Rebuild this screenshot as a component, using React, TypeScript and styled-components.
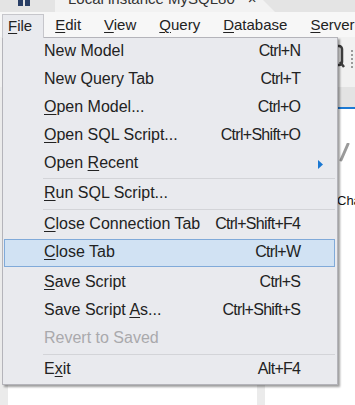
import React from 'react';
import styled, { createGlobalStyle } from 'styled-components';

const Global = createGlobalStyle`
  html, body { margin: 0; padding: 0; }
  body {
    width: 355px;
    height: 405px;
    overflow: hidden;
    background: #ffffff;
    font-family: "Liberation Sans", Arial, sans-serif;
  }
`;

const Window = styled.div`
  width: 355px;
  height: 405px;
  display: flex;
  flex-direction: column;
  overflow: hidden;
`;

const TitleBar = styled.div`
  flex: none;
  height: 12px;
  background: #e4e4e4;
  display: flex;
  align-items: flex-start;
  overflow: hidden;
`;

const AppIcon = styled.svg`
  flex: none;
  margin-left: 18px;
  margin-right: 25px;
`;

const DocTab = styled.div`
  flex: none;
  width: 220px;
  height: 12px;
  background: #f2f2f2;
  clip-path: polygon(0 0, calc(100% - 12px) 0, 100% 100%, 0 100%);
  display: flex;
  align-items: flex-start;
  padding-left: 13px;
  box-sizing: border-box;
  gap: 13px;
  font-size: 15px;
  color: #333;
  white-space: nowrap;
`;

const DocTabText = styled.span`
  margin-top: -10px;
  line-height: 17px;
`;

const MenuBar = styled.div`
  flex: none;
  position: relative;
  height: 25px;
  background: #f7f7f7;
  display: flex;
  align-items: flex-end;
  padding-left: 2px;
  gap: 5px;
  white-space: nowrap;
`;

const BarItem = styled.div<{ $open?: boolean }>`
  position: relative;
  z-index: ${(p) => (p.$open ? 6 : 'auto')};
  box-sizing: border-box;
  height: 24px;
  margin-bottom: ${(p) => (p.$open ? '-1px' : '0')};
  padding: 2px 11px 0 5px;
  border: 1px solid ${(p) => (p.$open ? '#c6c6cb' : 'transparent')};
  border-bottom: none;
  background: ${(p) => (p.$open ? '#e9eaee' : 'transparent')};
  font-size: 15px;
  line-height: 18px;
  color: #222;
`;

const Mn = styled.span`
  text-decoration: underline;
  text-decoration-thickness: 1px;
  text-underline-offset: 2px;
`;

const Dropdown = styled.div`
  position: absolute;
  top: 25px;
  left: 2px;
  z-index: 5;
  width: 336px;
  box-sizing: border-box;
  background: #e9eaee;
  border: 1px solid #b4b4ba;
  box-shadow: 2px 2px 2px rgba(0, 0, 0, 0.38);
  display: flex;
  flex-direction: column;
`;

const Row = styled.div<{ $active?: boolean; $disabled?: boolean }>`
  box-sizing: border-box;
  height: 28px;
  margin: 0 2px 0 1px;
  padding: 0 11px 3px 39px;
  border: 1px solid ${(p) => (p.$active ? '#80aad9' : 'transparent')};
  background: ${(p) => (p.$active ? '#d1e2f3' : 'transparent')};
  display: grid;
  grid-template-columns: 1fr auto 22px;
  align-items: center;
  font-size: 16px;
  color: ${(p) => (p.$disabled ? '#a9a9ac' : '#222')};
  white-space: nowrap;
`;

const Shortcut = styled.span`
  text-align: right;
  letter-spacing: -0.7px;
  margin-right: 0.7px;
`;

const SubArrow = styled.svg`
  justify-self: end;
  margin-top: 3px;
`;

const Separator = styled.div<{ $hidden?: boolean }>`
  height: 1px;
  margin: 0 2px 1.5px 40px;
  background: ${(p) => (p.$hidden ? 'transparent' : '#d3d4d8')};
`;

const Toolbar = styled.div`
  flex: none;
  height: 50px;
  background: #f1f1f1;
  display: flex;
  justify-content: flex-end;
  align-items: flex-start;
  gap: 6px;
  padding: 7px 2px 0 0;
  box-sizing: border-box;
`;

const Grip = styled.div`
  width: 0;
  height: 18px;
  margin-top: 6px;
  border-left: 2px dotted #9a9a9a;
`;

const Workspace = styled.div`
  flex: 1;
  display: flex;
  min-height: 0;
`;

const Strip = styled.div<{ $w: number }>`
  flex: none;
  width: ${(p) => p.$w}px;
  background: #ebebeb;
`;

const Sidebar = styled.div`
  flex: none;
  width: 249px;
  background: #ffffff;
`;

const Main = styled.div`
  flex: 1;
  display: flex;
  flex-direction: column;
  min-width: 0;
`;

const TabBar = styled.div`
  flex: none;
  height: 20px;
  background: #e3e3e3;
  border-bottom: 2px solid #1c7ad4;
`;

const Content = styled.div`
  flex: 1;
  background: #fff;
  display: flex;
  flex-direction: column;
  padding: 34px 0 0 73px;
  gap: 30px;
  white-space: nowrap;
`;

const ContentText = styled.span`
  font-size: 13px;
  color: #111;
  margin-left: -1px;
`;

type Entry =
  | { kind: 'item'; label: string; shortcut?: string; disabled?: boolean; active?: boolean; submenu?: boolean }
  | { kind: 'sep'; hidden?: boolean };

const entries: Entry[] = [
  { kind: 'item', label: 'New Model', shortcut: 'Ctrl+N' },
  { kind: 'item', label: 'New Query Tab', shortcut: 'Ctrl+T' },
  { kind: 'item', label: '&Open Model...', shortcut: 'Ctrl+O' },
  { kind: 'item', label: '&Open SQL Script...', shortcut: 'Ctrl+Shift+O' },
  { kind: 'item', label: 'Open &Recent', submenu: true },
  { kind: 'sep' },
  { kind: 'item', label: '&Run SQL Script...' },
  { kind: 'sep' },
  { kind: 'item', label: '&Close Connection Tab', shortcut: 'Ctrl+Shift+F4' },
  { kind: 'item', label: '&Close Tab', shortcut: 'Ctrl+W', active: true },
  { kind: 'sep', hidden: true },
  { kind: 'item', label: '&Save Script', shortcut: 'Ctrl+S' },
  { kind: 'item', label: 'Save Script &As...', shortcut: 'Ctrl+Shift+S' },
  { kind: 'item', label: 'Revert to Saved', disabled: true },
  { kind: 'sep' },
  { kind: 'item', label: 'E&xit', shortcut: 'Alt+F4' },
];

const barItems = ['&File', '&Edit', '&View', '&Query', '&Database', '&Server'];

function label(s: string) {
  const i = s.indexOf('&');
  if (i < 0) return s;
  return (
    <>
      {s.slice(0, i)}
      <Mn>{s[i + 1]}</Mn>
      {s.slice(i + 2)}
    </>
  );
}

export default function App() {
  return (
    <Window>
      <Global />
      <TitleBar>
        <AppIcon width="12" height="6" viewBox="0 0 12 6">
          <rect x="0" y="0" width="5" height="6" fill="#2a3f66" />
          <rect x="7" y="0" width="5" height="6" fill="#2a3f66" />
        </AppIcon>
        <DocTab>
          <DocTabText>Local instance MySQL80</DocTabText>
          <DocTabText>×</DocTabText>
        </DocTab>
      </TitleBar>
      <MenuBar>
        {barItems.map((b, i) => (
          <BarItem key={b} $open={i === 0}>
            {label(b)}
          </BarItem>
        ))}
        <Dropdown>
          {entries.map((e, i) =>
            e.kind === 'sep' ? (
              <Separator key={i} $hidden={e.hidden} />
            ) : (
              <Row key={i} $active={e.active} $disabled={e.disabled}>
                <span>{label(e.label)}</span>
                <Shortcut>{e.shortcut ?? ''}</Shortcut>
                {e.submenu ? (
                  <SubArrow width="5" height="9" viewBox="0 0 5 9">
                    <path d="M0 0 L5 4.5 L0 9 Z" fill="#1a78d2" />
                  </SubArrow>
                ) : (
                  <span />
                )}
              </Row>
            )
          )}
        </Dropdown>
      </MenuBar>
      <Toolbar>
        <svg width="16" height="24" viewBox="0 0 16 24">
          <rect x="2" y="2" width="11" height="19" rx="3" fill="none" stroke="#3d3d3d" strokeWidth="2.5" />
          <line x1="11" y1="18" x2="15" y2="23" stroke="#3d3d3d" strokeWidth="2.5" />
        </svg>
        <Grip />
      </Toolbar>
      <Workspace>
        <Strip $w={8} />
        <Sidebar />
        <Strip $w={8} />
        <Main>
          <TabBar />
          <Content>
            <svg width="12" height="20" viewBox="0 0 12 20">
              <path d="M10 1 L3 17" stroke="#9a9a9a" strokeWidth="3" strokeLinecap="round" />
            </svg>
            <ContentText>Change</ContentText>
          </Content>
        </Main>
      </Workspace>
    </Window>
  );
}
